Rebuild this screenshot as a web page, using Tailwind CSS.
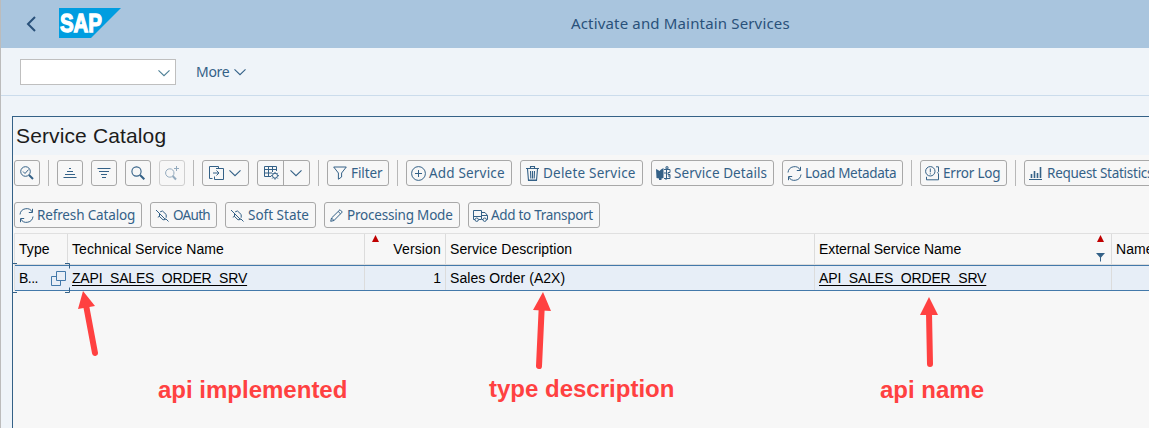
<!DOCTYPE html>
<html lang="en">
<head>
<meta charset="utf-8">
<title>Activate and Maintain Services</title>
<script src="https://cdn.jsdelivr.net/npm/@tailwindcss/browser@4"></script>
</head>
<body class="w-[1149px] h-[428px] overflow-hidden bg-[#eff4f9] font-['Noto_Sans',sans-serif] text-[#346187]">
<div class="relative w-[1149px] h-[428px] overflow-hidden border-l border-[#bcbcbc] flex flex-col">
  <header class="h-12 shrink-0 bg-[#a9c5de] flex items-center pl-[25px]">
    <svg class="-mt-px w-[11px] h-4 shrink-0" viewBox="0 0 11 16" fill="none" stroke="#29517a" stroke-width="2"><path d="M9 1 2 8l7 7"/></svg>
    <svg class="ml-[22px] -mt-[2px] w-[62px] h-[30px] shrink-0" viewBox="0 0 62 30"><path d="M0 0h62L32 30H0z" fill="#009de0"/><text x="1" y="23.500" textLength="42" lengthAdjust="spacingAndGlyphs" font-family="Liberation Sans" font-weight="bold" font-size="25" fill="#fff" stroke="#fff" stroke-width="1.300">SAP</text></svg>
    <h1 class="ml-[450px] -mt-[2px] text-[15px] tracking-[0.16px] leading-5 whitespace-nowrap text-[#29517a]">Activate and Maintain Services</h1>
  </header>
  <div class="h-12 shrink-0 border-b border-[#cbdcec] flex items-center pl-[19px]">
    <div class="w-[156px] h-[26px] mt-px bg-white border border-[#bfbfbf] flex items-center justify-end pr-[5px]">
      <svg class="w-3 h-2 mt-px" viewBox="0 0 12 8" fill="none" stroke="#4d7f95" stroke-width="1.1"><path d="m.5 1.3 5.5 5.4 5.5-5.4"/></svg>
    </div>
    <span class="ml-5 w-[33px] text-[14px] tracking-[-0.3px] leading-5 whitespace-nowrap">More</span>
    <svg class="ml-[5px] w-3 h-2" viewBox="0 0 12 8" fill="none" stroke="#346187" stroke-width="1.1"><path d="m.5 1.3 5.5 5.4 5.5-5.4"/></svg>
  </div>
  <main class="mt-5 ml-[11px] flex-1 border-l border-t border-[#346187] bg-[#f7f7f7]">
    <h2 class="h-[38px] bg-[#eff4f9] pl-[3px] pt-[7px] text-[21px] leading-6 font-['Liberation_Sans',sans-serif] tracking-[0.13px] text-[#1c1c1c]">Service Catalog</h2>
    <div class="mt-[5px] ml-px flex gap-2 h-[26px] text-[13.5px] [&>*]:shrink-0 [&>button]:flex [&>button]:items-center [&>button]:rounded-[3px] [&>button]:border [&>button]:border-[#a8a8a8] [&>button]:whitespace-nowrap [&_svg]:shrink-0 [&>i]:w-px [&>i]:bg-[#b8b8b8]">
      <button class="w-[26px] pl-[5px]"><svg class="w-[14px] h-[14px]" viewBox="0 0 14 14" fill="none" stroke="#346187"><circle cx="5.5" cy="5.5" r="4.8"/><path d="m3 5.5 2 2 3.6-4"/><path d="m9 9 4 4" stroke-width="2"/></svg></button>
      <i></i>
      <button class="w-[26px] pl-[5px]"><svg class="w-[14px] h-[14px]" viewBox="0 0 14 14" fill="none" stroke="#346187"><path d="M6 2.5h2M4 5.5h6M2 8.5h10M.5 11.5h13"/></svg></button>
      <button class="w-[26px] pl-[5px]"><svg class="w-[14px] h-[14px]" viewBox="0 0 14 14" fill="none" stroke="#346187"><path d="M.5 2.5h13M2 5.5h10M4 8.5h6M5 11.5h4"/></svg></button>
      <button class="w-[26px] pl-[5px]"><svg class="w-[14px] h-[14px]" viewBox="0 0 14 14" fill="none" stroke="#346187"><circle cx="5.5" cy="5.5" r="4.6" stroke-width="1.1"/><path d="m9 9 4.3 4.3" stroke-width="2"/></svg></button>
      <button class="w-[26px] pl-[5px] opacity-50"><svg class="w-[14px] h-4" viewBox="0 0 14 16" fill="none" stroke="#346187"><circle cx="4.8" cy="8" r="4.2"/><path d="m7.7 11 3.3 3.5" stroke-width="2"/><path d="M11.5 1v5M9 3.5h5"/></svg></button>
      <i></i>
      <button class="w-[47px] pl-[6px] gap-[5px]"><svg class="w-[15px] h-[14px]" viewBox="0 0 15 14" fill="none" stroke="#346187"><path d="M9.5 2.5V.5h-9v12h3M7 2.5h7.500v11h-9v-3M4 7h6M7.500 4.500 10 7 7.500 9.500"/></svg><svg class="w-3 h-2" viewBox="0 0 12 8" fill="none" stroke="#346187" stroke-width="1.1"><path d="m.5 1.3 5.5 5.4 5.5-5.4"/></svg></button>
      <button class="w-[53px] pl-[6px]"><svg class="w-[15px] h-[14px]" viewBox="0 0 15 14" fill="none" stroke="#346187"><path d="M12.500 5V.5H.5v10H7M.5 3.500h12M.5 7H8M4.500.5v10M8.500.5V6"/><circle cx="11" cy="9.700" r="2.500"/><path d="M11 6v1.500M11 12v1.700M7 9.700h1.500M13.500 9.700H15M8.200 6.900l1 1M13.800 6.900l-1 1M8.200 12.500l1-1M13.800 12.500l-1-1"/></svg><span class="ml-[4px] w-px h-full bg-[#a8a8a8]"></span><svg class="ml-[6px] w-3 h-2" viewBox="0 0 12 8" fill="none" stroke="#346187" stroke-width="1.1"><path d="m.5 1.3 5.5 5.4 5.5-5.4"/></svg></button>
      <i></i>
      <button class="w-[62px] pl-[5px] gap-1"><svg class="w-[14px] h-[14px]" viewBox="0 0 14 14" fill="none" stroke="#346187"><path d="M.7 1h12.600L8.600 7v4L5.400 13.200V7z"/></svg><span class="tracking-[-0.1px]">Filter</span></button>
      <i></i>
      <button class="w-[106px] pl-[4px] gap-[3px]"><svg class="w-[15px] h-[15px]" viewBox="0 0 15 15" fill="none" stroke="#346187"><circle cx="7.500" cy="7.500" r="6.900"/><path d="M7.500 4v7M4 7.500h7"/></svg><span class="tracking-[0.18px]">Add Service</span></button>
      <button class="w-[123px] pl-[5px] gap-1"><svg class="w-[13px] h-[15px]" viewBox="0 0 13 15" fill="none" stroke="#346187"><path d="M0 2.500h13M4.500 2.500v-2h4v2M1.500 3l1 11.500h8l1-11.500M4.500 5l.3 7.500M6.500 5v7.500M8.500 5l-.3 7.500M3 14h7" stroke-width="1.100"/></svg><span class="tracking-[0.22px]">Delete Service</span></button>
      <button class="w-[123px] pl-[4px] gap-[3px]"><svg class="w-[15px] h-[15px]" viewBox="0 0 15 15" fill="none" stroke="#346187"><path d="M0 3l2 1 1.500 1L5 3.500 7.500 2v10l-2 .5V14H3v-1.500L.5 12z" fill="#346187" stroke="none"/><path d="M10 .8h2v2h-2zM8 3.500h6v3h-2v2h2v4H8M10.500 4v8M8 7h2M12 10h2M10 12.500V14"/></svg><span class="tracking-[0.08px]">Service Details</span></button>
      <button class="w-[121px] pl-[4px] gap-[3px]"><svg class="w-[15px] h-[15px]" viewBox="0 0 15 15" fill="none" stroke="#346187"><path d="M1 6.500A6.600 6.600 0 0 1 13.300 4M13.500.8V4.500H9.800M14 8.500A6.600 6.600 0 0 1 1.700 11M1.500 14.200V10.500h3.700"/></svg><span class="tracking-[-0.3px]">Load Metadata</span></button>
      <i></i>
      <button class="w-[87px] pl-[4px] gap-[3px]"><svg class="w-[15px] h-[15px]" viewBox="0 0 15 15" fill="none" stroke="#346187"><circle cx="5.300" cy="5.300" r="4.700"/><path d="M5.300 2.500v3.800M5.300 7.300v1.100M11 .8h2.500v5l-1 1 1 1v6h-12v-3" /></svg><span class="tracking-[-0.2px]">Error Log</span></button>
      <i></i>
      <button class="w-[140px] pl-[4px] gap-[5px]"><svg class="w-[13px] h-[13px]" viewBox="0 0 13 13" fill="none" stroke="#346187"><path d="M0 12.500h13"/><path d="M2.500 11V7M5.500 11V4M8.500 11V6M11.500 11V0" stroke-width="1.600"/></svg><span class="tracking-[-0.27px]">Request Statistics</span></button>
    </div>
    <div class="mt-4 ml-px flex gap-2 h-[26px] text-[13.5px] [&>button]:shrink-0 [&>button]:flex [&>button]:items-center [&>button]:rounded-[3px] [&>button]:border [&>button]:border-[#a8a8a8] [&>button]:whitespace-nowrap [&_svg]:shrink-0">
      <button class="w-[128px] pl-[4px] gap-[3px]"><svg class="w-[15px] h-[15px]" viewBox="0 0 15 15" fill="none" stroke="#346187"><path d="M1 6.500A6.600 6.600 0 0 1 13.300 4M13.500.8V4.500H9.800M14 8.500A6.600 6.600 0 0 1 1.700 11M1.500 14.200V10.500h3.700"/></svg><span class="tracking-[-0.15px]">Refresh Catalog</span></button>
      <button class="w-[67px] pl-[5px] gap-1"><svg class="w-[13px] h-[13px]" viewBox="0 0 13 13" fill="none" stroke="#346187"><path d="m0 1 3 3M9.500 9.500l3 3M3 4l6.500 6.500M3.500 4.500v3l3.500 3.300 2.500-.3M4.200 2.800 6.500 2l3.700 3.500v3.200M1.800 8.200l2-1"/></svg><span class="tracking-[-0.7px]">OAuth</span></button>
      <button class="w-[91px] pl-[5px] gap-1"><svg class="w-[13px] h-[13px]" viewBox="0 0 13 13" fill="none" stroke="#346187"><path d="m0 1 3 3M9.500 9.500l3 3M3 4l6.500 6.500M3.500 4.500v3l3.500 3.300 2.500-.3M4.200 2.800 6.500 2l3.700 3.500v3.200M1.800 8.200l2-1"/></svg><span>Soft State</span></button>
      <button class="w-[136px] pl-[5px] gap-1"><svg class="w-[13px] h-[13px]" viewBox="0 0 13 13" fill="none" stroke="#346187"><path d="M.7 12.300 1.500 9 10 .7l2.300 2.300L4 11.500zM8.200 2.500l2.300 2.300M1.500 9 4 11.500"/></svg><span class="tracking-[-0.2px]">Processing Mode</span></button>
      <button class="w-[132px] pl-[4px] gap-[3px]"><svg class="w-[15px] h-[13px]" viewBox="0 0 15 13" fill="none" stroke="#346187"><path d="M2 10.500H.5v-9h8v9H5.500M8.500 3.500h3.500l2.500 3v4h-1M8.500 6.500h6M.5 7.500h8M9 10.500h1"/><circle cx="3.700" cy="10.700" r="1.700"/><circle cx="11.700" cy="10.700" r="1.700"/></svg><span class="tracking-[-0.3px]">Add to Transport</span></button>
    </div>
    <div class="mt-[5px] ml-px border-t border-l border-[#e0e0e0] grid grid-cols-[53px_297px_81px_369px_297px_60px] font-['Liberation_Sans',sans-serif] text-[14px] tracking-[0.05px] text-black whitespace-nowrap">
      <div class="h-[31px] border-r border-b border-[#dcdcdc] pl-[4px] leading-[31px]">Type</div>
      <div class="h-[31px] border-r border-b border-[#dcdcdc] pl-[4px] leading-[31px] tracking-[0.08px]">Technical Service Name</div>
      <div class="h-[31px] border-r border-b border-[#dcdcdc] pr-[4px] pl-[7px] leading-[31px] tracking-[0.15px] flex justify-between"><svg class="w-[7px] h-[7px] mt-px" viewBox="0 0 7 7"><path d="M3.500 0 7 7H0z" fill="#c00000"/></svg>Version</div>
      <div class="h-[31px] border-r border-b border-[#dcdcdc] pl-[4px] leading-[31px] tracking-[0.08px]">Service Description</div>
      <div class="h-[31px] border-r border-b border-[#dcdcdc] pl-[4px] pr-[6px] leading-[31px] tracking-[-0.05px] flex justify-between">External Service Name<svg class="w-[9px] h-[28px]" viewBox="0 0 9 28"><path d="M4.500 1 8 8H1z" fill="#c00000"/><path d="M0 19h9L5 23.500v4H4v-4z" fill="#346187"/></svg></div>
      <div class="h-[31px] border-b border-[#dcdcdc] pl-[4px] leading-[31px]">Name</div>
      <div class="relative h-[26px] border-y border-[#4379aa] bg-[#e7eef7] pl-[4px] pr-[2px] leading-[24px] flex justify-between items-center"><span class="tracking-[-0.5px]">B...</span><svg class="w-[15px] h-[15px]" viewBox="0 0 15 15" fill="none" stroke="#4379aa"><path d="M5.500.5h9v9h-9zM5.500 5.500h-5v9h9v-5"/></svg>
        <svg class="absolute -left-[2px] -top-[3px] w-[57px] h-[30px]" viewBox="0 0 57 30" fill="none" stroke="#346187"><path d="M0 .5h4M52 .5h4.500v5M0 29.500h4M52 29.500h4.500v-5"/></svg></div>
      <div class="h-[26px] border-y border-[#4379aa] bg-[#e7eef7] pl-[4px] leading-[24px]"><span class="underline underline-offset-2 [text-decoration-skip-ink:none] tracking-[-0.18px]">ZAPI_SALES_ORDER_SRV</span></div>
      <div class="h-[26px] border-y border-[#4379aa] bg-[#e7eef7] shadow-[inset_1px_0_#dcdcdc] pr-[5px] leading-[24px] text-right -ml-px">1</div>
      <div class="h-[26px] border-y border-[#4379aa] bg-[#e7eef7] shadow-[inset_1px_0_#dcdcdc] pl-[5px] leading-[24px] -ml-px tracking-[0.05px]">Sales Order (A2X)</div>
      <div class="h-[26px] border-y border-[#4379aa] bg-[#e7eef7] shadow-[inset_1px_0_#dcdcdc] pl-[5px] leading-[24px] -ml-px"><span class="underline underline-offset-2 [text-decoration-skip-ink:none] tracking-[-0.15px]">API_SALES_ORDER_SRV</span></div>
      <div class="h-[26px] border-y border-[#4379aa] bg-[#e7eef7] shadow-[inset_1px_0_#dcdcdc] -ml-px"></div>
    </div>
  </main>
  <div class="absolute inset-0 font-['Liberation_Sans',sans-serif] font-bold text-[24px] leading-7 text-[#ff4141] whitespace-nowrap">
    <svg class="absolute left-[-1px] top-0 w-[1149px] h-[428px]" viewBox="0 0 1149 428"><g stroke="#ff4141" stroke-width="6" stroke-linecap="round"><path d="M86 305 95 353M541.700 308 539 366M929 313 930 364"/></g><path d="M83 291 95 306 78 309zM543 292 551 311 533 310zM929 297 938 315H920z" fill="#ff4141"/></svg>
    <span class="absolute left-[157px] top-[376px]">api implemented</span>
    <span class="absolute left-[488px] top-[375px]">type description</span>
    <span class="absolute left-[879px] top-[376px]">api name</span>
  </div>
</div>
</body>
</html>
